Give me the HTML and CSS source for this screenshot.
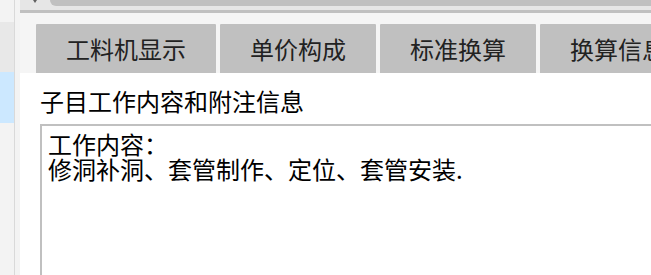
FILE: index.html
```html
<!DOCTYPE html>
<html lang="zh-CN">
<head>
<meta charset="utf-8">
<title>子目工作内容和附注信息</title>
<link rel="stylesheet" href="styles.css">
</head>
<body>
<div class="app">
  <div class="side">
    <div class="side-seg side-a"></div>
    <div class="side-seg side-b"></div>
    <div class="side-seg side-sel"></div>
    <div class="side-seg side-rest"></div>
  </div>
  <div class="divider"></div>
  <div class="gutter"></div>
  <div class="main">
    <div class="hscroll">
      <div class="arrow"></div>
      <div class="thumb"></div>
    </div>
    <div class="rule"></div>
    <div class="tabstrip">
      <div class="tab tab-wide">工料机显示</div>
      <div class="tab">单价构成</div>
      <div class="tab">标准换算</div>
      <div class="tab tab-last">换算信息</div>
    </div>
    <div class="content">
      <div class="subtitle">子目工作内容和附注信息</div>
      <div class="memo">
        <div class="memo-line">工作内容：</div>
        <div class="memo-line">修洞补洞、套管制作、定位、套管安装.</div>
      </div>
    </div>
  </div>
</div>
</body>
</html>
```

FILE: styles.css
```css
html, body {
  margin: 0;
  padding: 0;
}
body {
  width: 651px;
  height: 275px;
  overflow: hidden;
  background: #f3f3f3;
  font-family: "Noto Sans CJK SC", "Noto Sans", sans-serif;
}
.app {
  display: flex;
  height: 275px;
}
.side {
  width: 14px;
  display: flex;
  flex-direction: column;
  flex-shrink: 0;
}
.side-a { height: 22px; background: #f3f3f3; }
.side-b { height: 50px; background: #e8e8e8; }
.side-sel { height: 51px; background: #cce8ff; }
.side-rest { flex: 1; background: #f3f3f3; }
.divider {
  width: 1px;
  background: #d9d9d9;
  flex-shrink: 0;
}
.gutter {
  width: 5px;
  background: #f3f3f3;
  flex-shrink: 0;
}
.main {
  flex: 1;
  min-width: 0;
  display: flex;
  flex-direction: column;
}
.hscroll {
  height: 10px;
  background: #e6e6e6;
  display: flex;
  align-items: flex-start;
}
.arrow {
  width: 0;
  height: 0;
  margin-left: 13px;
  border-left: 2px solid transparent;
  border-right: 2px solid transparent;
  border-top: 3px solid #606060;
}
.thumb {
  flex: 1;
  height: 6px;
  margin-left: 13px;
  background: #c0c0c0;
  border-radius: 0 0 0 6px;
}
.rule {
  height: 3px;
  background: #c0c0c0;
}
.tabstrip {
  display: flex;
  gap: 4px;
  padding: 11px 0 0 16px;
  background: #f5f5f5;
  overflow: hidden;
}
.tab {
  flex-shrink: 0;
  width: 156px;
  height: 49px;
  background: #c0c0c0;
  border-radius: 1px 1px 0 0;
  color: #222;
  font-size: 24px;
  line-height: 49px;
  text-align: center;
  white-space: nowrap;
  overflow: hidden;
}
.tab-wide { width: 180px; }
.tab-last { width: 156px; }
.content {
  flex: 1;
  background: #fff;
  padding: 16px 0 0 20px;
  overflow: hidden;
}
.subtitle {
  font-size: 24px;
  line-height: 24px;
  color: #000;
  white-space: nowrap;
}
.memo {
  margin-top: 11px;
  width: 640px;
  height: 200px;
  border-top: 2px solid #c0c0c0;
  border-left: 2px solid #c0c0c0;
  padding: 5px 0 0 6px;
  box-sizing: border-box;
}
.memo-line {
  font-size: 24px;
  line-height: 25px;
  color: #000;
  white-space: nowrap;
}
```
